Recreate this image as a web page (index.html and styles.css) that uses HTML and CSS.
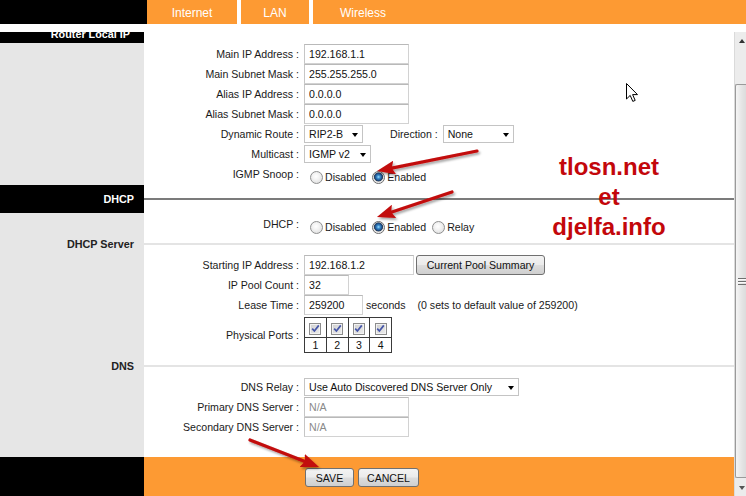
FILE: index.html
```html
<!DOCTYPE html>
<html>
<head>
<meta charset="utf-8">
<title>LAN</title>
<link rel="stylesheet" href="styles.css">
</head>
<body>
<header class="topbar">
  <div class="corner"></div>
  <nav class="tabs">
    <span class="tab tab-internet">Internet</span>
    <span class="tab tab-lan">LAN</span>
    <span class="tab tab-wireless">Wireless</span>
  </nav>
</header>
<div class="gap"></div>
<div class="main">
  <div class="frame">
    <section class="sec sec-cut">
      <div class="side side-dark"><span class="cut-text">Router Local IP</span></div>
      <div class="content"></div>
    </section>

    <section class="sec sec-lan">
      <div class="side"></div>
      <div class="content form">
        <div class="row"><span class="lbl">Main IP Address :</span><input class="txt w105" type="text" value="192.168.1.1"></div>
        <div class="row"><span class="lbl">Main Subnet Mask :</span><input class="txt w105" type="text" value="255.255.255.0"></div>
        <div class="row"><span class="lbl">Alias IP Address :</span><input class="txt w105" type="text" value="0.0.0.0"></div>
        <div class="row"><span class="lbl">Alias Subnet Mask :</span><input class="txt w105" type="text" value="0.0.0.0"></div>
        <div class="row">
          <span class="lbl">Dynamic Route :</span>
          <div class="sel w59"><span>RIP2-B</span><i class="caret"></i></div>
          <span class="lbl-dir">Direction :</span>
          <div class="sel w71"><span>None</span><i class="caret"></i></div>
        </div>
        <div class="row"><span class="lbl">Multicast :</span><div class="sel w67"><span>IGMP v2</span><i class="caret"></i></div></div>
        <div class="row">
          <span class="lbl">IGMP Snoop :</span>
          <div class="radios">
            <input class="radio" type="radio" name="igmp"><span class="opt">Disabled</span>
            <input class="radio" type="radio" name="igmp" checked><span class="opt">Enabled</span>
          </div>
        </div>
      </div>
    </section>

    <section class="sec sec-head">
      <div class="side side-dark">DHCP</div>
      <div class="content"><div class="rule-dark"></div></div>
    </section>

    <section class="sec sec-dhcp">
      <div class="side"></div>
      <div class="content form">
        <div class="row">
          <span class="lbl">DHCP :</span>
          <div class="radios">
            <input class="radio" type="radio" name="dhcp"><span class="opt">Disabled</span>
            <input class="radio" type="radio" name="dhcp" checked><span class="opt">Enabled</span>
            <input class="radio" type="radio" name="dhcp"><span class="opt">Relay</span>
          </div>
        </div>
      </div>
    </section>

    <section class="sec sec-sub">
      <div class="side side-title">DHCP Server</div>
      <div class="content"><div class="rule-light"></div></div>
    </section>

    <section class="sec sec-server">
      <div class="side"></div>
      <div class="content form">
        <div class="row"><span class="lbl">Starting IP Address :</span><input class="txt w110" type="text" value="192.168.1.2"><button class="btn btn-pool" type="button">Current Pool Summary</button></div>
        <div class="row"><span class="lbl">IP Pool Count :</span><input class="txt w45" type="text" value="32"></div>
        <div class="row"><span class="lbl">Lease Time :</span><input class="txt w59" type="text" value="259200"><span class="unit">seconds</span><span class="hint">(0 sets to default value of 259200)</span></div>
        <div class="row row-ports">
          <span class="lbl">Physical Ports :</span>
          <table class="ports">
            <tr class="chk">
              <td><span class="cb"><svg width="9" height="9" viewBox="0 0 9 9"><path d="M1.2 4.6 L3.4 7 L7.8 1.4" fill="none" stroke="#4656a8" stroke-width="1.7"/></svg></span></td>
              <td><span class="cb"><svg width="9" height="9" viewBox="0 0 9 9"><path d="M1.2 4.6 L3.4 7 L7.8 1.4" fill="none" stroke="#4656a8" stroke-width="1.7"/></svg></span></td>
              <td><span class="cb"><svg width="9" height="9" viewBox="0 0 9 9"><path d="M1.2 4.6 L3.4 7 L7.8 1.4" fill="none" stroke="#4656a8" stroke-width="1.7"/></svg></span></td>
              <td><span class="cb"><svg width="9" height="9" viewBox="0 0 9 9"><path d="M1.2 4.6 L3.4 7 L7.8 1.4" fill="none" stroke="#4656a8" stroke-width="1.7"/></svg></span></td>
            </tr>
            <tr class="num"><td>1</td><td>2</td><td>3</td><td>4</td></tr>
          </table>
        </div>
      </div>
    </section>

    <section class="sec sec-sub">
      <div class="side side-title">DNS</div>
      <div class="content"><div class="rule-light"></div></div>
    </section>

    <section class="sec sec-dns">
      <div class="side"></div>
      <div class="content form">
        <div class="row"><span class="lbl">DNS Relay :</span><div class="sel w215"><span>Use Auto Discovered DNS Server Only</span><i class="caret"></i></div></div>
        <div class="row"><span class="lbl">Primary DNS Server :</span><input class="txt w105 na" type="text" value="N/A"></div>
        <div class="row"><span class="lbl">Secondary DNS Server :</span><input class="txt w105 na" type="text" value="N/A"></div>
      </div>
    </section>

    <section class="sec sec-foot">
      <div class="side side-dark"></div>
      <div class="content footbar">
        <button class="btn btn-save" type="button">SAVE</button>
        <button class="btn btn-cancel" type="button">CANCEL</button>
      </div>
    </section>
  </div>

  <div class="scrollbar">
    <div class="sb-btn sb-up"><i class="tri-up"></i></div>
    <div class="sb-track sb-track-top"></div>
    <div class="sb-thumb"><span class="grip"></span></div>
    <div class="sb-track sb-track-bottom"></div>
    <div class="sb-btn sb-down"><i class="tri-down"></i></div>
  </div>
</div>

<div class="watermark">tlosn.net<br>et<br>djelfa.info</div>

<svg class="overlay" width="746" height="496" viewBox="0 0 746 496">
  <defs>
    <marker id="ah" viewBox="0 0 18 14" refX="3" refY="7" markerWidth="18" markerHeight="14" markerUnits="userSpaceOnUse" orient="auto">
      <path d="M0 0 L18 7 L0 14 L3 7 Z" fill="#c20a0a"/>
    </marker>
    <filter id="sh" x="-20%" y="-60%" width="140%" height="220%">
      <feDropShadow dx="1.5" dy="2" stdDeviation="1.3" flood-color="#000" flood-opacity="0.35"/>
    </filter>
  </defs>
  <g filter="url(#sh)" stroke="#c20a0a" stroke-width="3.2" stroke-linecap="round" fill="none">
    <line x1="477" y1="151" x2="391.7" y2="168.1" marker-end="url(#ah)"/>
    <line x1="452" y1="192" x2="391.2" y2="212.3" marker-end="url(#ah)"/>
    <line x1="250" y1="440" x2="305" y2="461.5" marker-end="url(#ah)"/>
  </g>
  <path d="M626.5 83.5 L626.5 99 L630.2 95.4 L632.8 101.4 L635.2 100.4 L632.6 94.6 L637.5 94.6 Z" fill="#fff" stroke="#000" stroke-width="1" stroke-linejoin="round"/>
</svg>
</body>
</html>
```

FILE: styles.css
```css
html, body {
  margin: 0;
  padding: 0;
}

body {
  width: 746px;
  height: 496px;
  overflow: hidden;
  position: relative;
  background: #fff;
  color: #1a1a1a;
  font-family: "Liberation Sans", Arial, sans-serif;
  font-size: 10.6px;
}

/* ---------- top navigation ---------- */
.topbar {
  display: flex;
  height: 24px;
}

.corner {
  width: 147px;
  background: #000;
}

.tabs {
  flex: 1;
  display: flex;
  background: #fd9a33;
}

.tab {
  box-sizing: border-box;
  height: 24px;
  padding-top: 6px;
  color: #fff;
  font-size: 12px;
  text-align: center;
}

.tab-internet { width: 90px; }
.tab-lan { width: 72px; border-left: 4px solid #fff; }
.tab-wireless { width: 104px; border-left: 4px solid #fff; }

.gap {
  height: 8px;
}

/* ---------- main frame ---------- */
.main {
  display: flex;
  height: 464px;
}

.frame {
  width: 734px;
  display: flex;
  flex-direction: column;
}

.sec {
  display: flex;
  flex: none;
}

.side {
  width: 144px;
  flex: none;
  box-sizing: border-box;
  padding-right: 10px;
  background: #e6e6e6;
  text-align: right;
  font-weight: bold;
  font-size: 10.8px;
}

.side-dark {
  background: #000;
  color: #fff;
}

.side-title {
  color: #222;
  line-height: 16px;
}

.content {
  flex: 1;
  background: #fff;
}

.sec-cut { height: 11px; }
.sec-cut .side {
  overflow: hidden;
  padding-right: 14px;
}
.cut-text {
  display: block;
  line-height: 11px;
  margin-top: -3px;
}

.sec-lan { height: 142px; }
.sec-lan .form { padding-top: 1px; }

.sec-head { height: 28px; }
.sec-head .side { line-height: 28px; }
.sec-head .content { padding-top: 13px; }
.rule-dark {
  height: 2px;
  background: #7b7b7b;
}

.sec-dhcp { height: 23px; }
.sec-dhcp .form { padding-top: 1px; }

.sec-sub { height: 16px; }
.sec-sub .content { padding-top: 7px; }
.rule-light {
  height: 2px;
  background: #e4e4e4;
}

.sec-server { height: 106px; }
.sec-server .form { padding-top: 3px; }

.sec-dns { height: 83px; }
.sec-dns .form { padding-top: 3px; }

.sec-foot { flex: 1; }

/* ---------- form rows ---------- */
.form {
  display: flex;
  flex-direction: column;
}

.row {
  display: flex;
  align-items: center;
  height: 20px;
  white-space: nowrap;
}

.lbl {
  width: 155px;
  flex: none;
  padding-right: 2px;
  text-align: right;
}

.txt {
  box-sizing: border-box;
  height: 20px;
  margin: 0 0 0 3px;
  padding: 0 0 0 4px;
  border: 1px solid #d2d2d2;
  border-top-color: #b9b9b9;
  border-left-color: #c6c6c6;
  background: #fff;
  color: #111;
  font: inherit;
  outline: none;
}

.txt.na { color: #8a8a8a; }

.w105 { width: 105px; }
.w110 { width: 110px; }
.w45 { width: 45px; }
.w59 { width: 59px; }

.sel {
  box-sizing: border-box;
  height: 18px;
  margin-left: 3px;
  padding: 0 4px 0 4px;
  display: flex;
  align-items: center;
  border: 1px solid #c4c4c4;
  background: #fff;
  color: #111;
}

.sel span { flex: 1; }

.sel.w59 { width: 59px; }
.sel.w67 { width: 67px; }
.sel.w71 { width: 71px; margin-left: 5px; }
.sel.w215 { width: 215px; }

.caret {
  width: 0;
  height: 0;
  border-left: 3.5px solid transparent;
  border-right: 3.5px solid transparent;
  border-top: 4px solid #000;
  margin-top: 2px;
}

.lbl-dir {
  margin-left: 27px;
}

.radios {
  display: flex;
  align-items: center;
  margin-left: 6px;
  margin-top: 6px;
}

.radio {
  -webkit-appearance: none;
  appearance: none;
  box-sizing: border-box;
  width: 13px;
  height: 13px;
  margin: 0 2px 0 6px;
  border: 1px solid #8e8f8f;
  border-radius: 50%;
  background: radial-gradient(circle at 45% 40%, #ffffff 0, #f4f4f4 35%, #d7d7d7 100%);
}

.radios .radio:first-child { margin-left: 3px; }

.radio:checked {
  border-color: #6b6b6b;
  background: radial-gradient(circle at 50% 45%, #9fe0ff 0, #3e8fcf 1.6px, #1b4f8a 3.4px, #2c3e57 4.2px, #d9d9d9 4.8px, #f6f6f6 6px);
}

.opt {
  margin-right: 0;
}

.btn {
  box-sizing: border-box;
  height: 20px;
  padding: 0;
  border: 1px solid #707070;
  border-radius: 3px;
  background: linear-gradient(#f3f3f3 0, #ebebeb 48%, #dddddd 52%, #cfcfcf 100%);
  color: #111;
  font: inherit;
}

.btn-pool {
  width: 129px;
  margin-left: 2px;
}

.unit {
  margin-left: 3px;
}

.hint {
  margin-left: 12px;
}

.row-ports {
  height: 36px;
  margin-top: 2px;
}

.ports {
  margin-left: 3px;
  width: 88px;
  border-collapse: collapse;
  table-layout: fixed;
  border: 1px solid #3a3a3a;
}

.ports td {
  border: 1px solid #3a3a3a;
  padding: 0;
  text-align: center;
  color: #111;
}

.ports .chk td {
  height: 19px;
}

.ports .num td {
  height: 14px;
  line-height: 14px;
}

.cb {
  box-sizing: border-box;
  display: inline-flex;
  align-items: center;
  justify-content: center;
  width: 12px;
  height: 12px;
  margin-top: 2px;
  border: 1px solid #8c8c8c;
  background: linear-gradient(135deg, #cfcfcf, #ededed);
  box-shadow: inset 0 0 0 1px #f2f2f2;
  vertical-align: middle;
}

.cb svg { display: block; }

/* ---------- footer ---------- */
.footbar {
  background: #fd9a33;
  display: flex;
  align-items: flex-start;
  padding: 11px 0 0 161px;
}

.btn-save {
  width: 49px;
  height: 19px;
}

.btn-cancel {
  width: 61px;
  height: 19px;
  margin-left: 4px;
}

/* ---------- scrollbar ---------- */
.scrollbar {
  width: 12px;
  box-sizing: border-box;
  display: flex;
  flex-direction: column;
  background: #ececec;
  border-left: 1px solid #dadada;
}

.sb-btn {
  flex: none;
  display: flex;
  align-items: center;
  padding-left: 4px;
}

.sb-up { height: 17px; }
.sb-down { height: 16px; }

.tri-up {
  width: 0;
  height: 0;
  border-left: 3.5px solid transparent;
  border-right: 3.5px solid transparent;
  border-bottom: 4px solid #333;
}

.tri-down {
  width: 0;
  height: 0;
  border-left: 3.5px solid transparent;
  border-right: 3.5px solid transparent;
  border-top: 4px solid #555;
}

.sb-track-top { height: 35px; flex: none; }
.sb-track-bottom { height: 2px; flex: none; }

.sb-thumb {
  flex: none;
  height: 394px;
  box-sizing: border-box;
  border: 1px solid #9a9a9a;
  border-right: none;
  border-radius: 2px 0 0 2px;
  background: linear-gradient(90deg, #f5f5f5, #e4e4e4 60%, #dcdcdc);
  display: flex;
  align-items: center;
  padding-left: 2px;
}

.grip {
  width: 8px;
  height: 7px;
  background: repeating-linear-gradient(#6f6f6f 0 1px, #fafafa 1px 2px, transparent 2px 3px);
}

/* ---------- overlays ---------- */
.watermark {
  position: absolute;
  left: 509px;
  top: 152px;
  width: 200px;
  text-align: center;
  color: #c3070b;
  font-family: "Liberation Sans", Arial, sans-serif;
  font-weight: bold;
  font-size: 24px;
  line-height: 30px;
}

.overlay {
  position: absolute;
  left: 0;
  top: 0;
  pointer-events: none;
}
```
